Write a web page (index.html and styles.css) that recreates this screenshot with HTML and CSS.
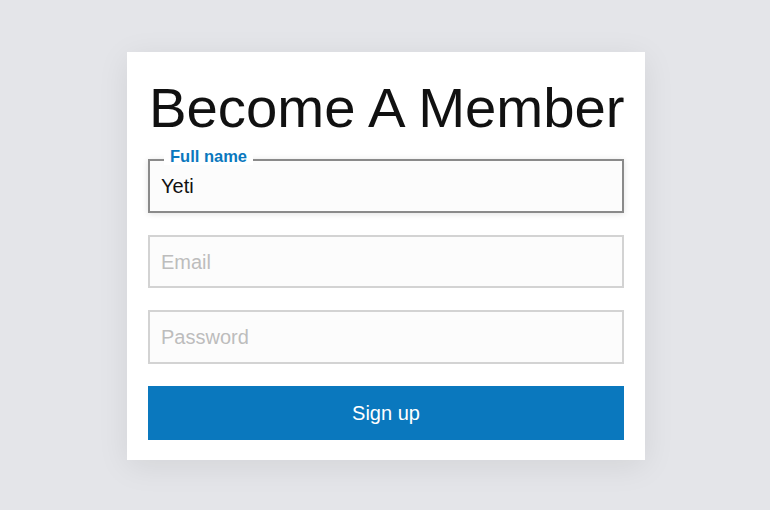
FILE: index.html
```html
<!DOCTYPE html>
<html>
<head>
<meta charset="utf-8">
<link rel="stylesheet" href="styles.css">
</head>
<body>
<div class="page">
  <form class="card">
    <h1 class="title">Become A Member</h1>
    <div class="field active">
      <span class="label">Full name</span>
      <div class="input">Yeti</div>
    </div>
    <div class="field">
      <div class="input placeholder">Email</div>
    </div>
    <div class="field">
      <div class="input placeholder">Password</div>
    </div>
    <div class="button">Sign up</div>
  </form>
</div>
</body>
</html>
```
FILE: styles.css
```css
html, body {
  margin: 0;
  padding: 0;
}
body {
  background: #e4e5e9;
  font-family: "Liberation Sans", Arial, sans-serif;
  width: 770px;
  height: 510px;
  overflow: hidden;
}
.page {
  display: flex;
  justify-content: center;
  padding-top: 52px;
  padding-left: 2px;
}
.card {
  width: 518px;
  box-sizing: border-box;
  background: #fff;
  padding: 24px 21px 20px;
  box-shadow: 0 6px 30px rgba(0,0,0,0.08);
  display: flex;
  flex-direction: column;
}
.title {
  margin: 0 0 0 1px;
  font-weight: normal;
  font-size: 56.3px;
  line-height: 64px;
  color: #111;
  white-space: nowrap;
}
.field {
  position: relative;
  margin-bottom: 22px;
}
.field.active {
  margin-top: 19px;
}
.input {
  height: 53.5px;
  box-sizing: border-box;
  border: 2px solid #d3d3d3;
  background: #fcfcfc;
  padding: 2px 11px 0;
  font-size: 20px;
  line-height: 47px;
  color: #111;
}
.active .input {
  border-color: #8a8a8a;
  box-shadow: 0 1px 6px rgba(0,0,0,0.12);
}
.placeholder {
  color: #bdbdbd;
}
.label {
  position: absolute;
  left: 16px;
  top: -12px;
  background: #fff;
  padding: 0 6px;
  font-size: 16.5px;
  font-weight: bold;
  color: #0a78be;
  line-height: 18px;
}
.button {
  height: 54.5px;
  background: #0a78be;
  color: #fff;
  font-size: 20px;
  line-height: 54px;
  text-align: center;
}
```
